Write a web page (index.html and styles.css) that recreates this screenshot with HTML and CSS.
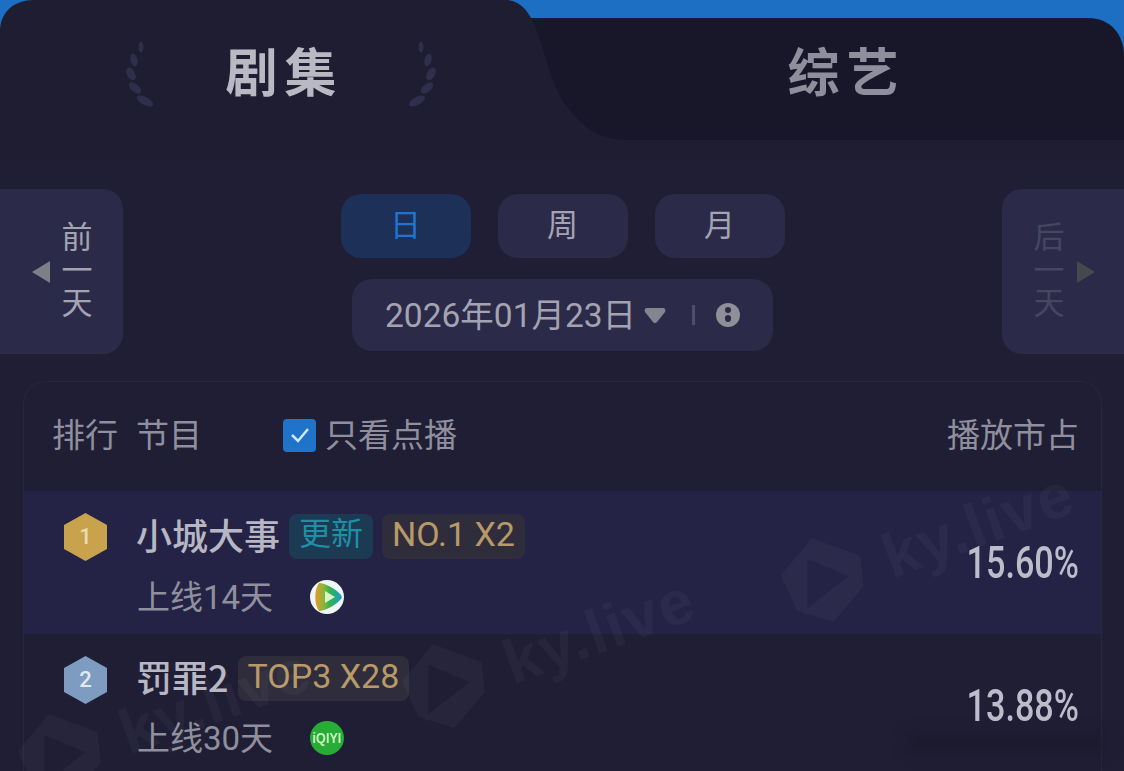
FILE: index.html
```html
<!DOCTYPE html>
<html lang="zh-CN">
<head>
    <meta charset="UTF-8">
    <meta name="viewport" content="width=device-width, initial-scale=1.0">
    <title>播放市占</title>
    <link rel="stylesheet" href="styles.css">
</head>
<body>
    <div class="tabs">
        <svg class="tabs-bg" width="1124" height="140" viewBox="0 0 1124 140">
            <path d="M500 18H1088C1110 18 1124 34 1124 56V140H500Z" fill="#18172a"/>
            <path d="M530 19H1092" stroke="#17184a" stroke-width="2"/>
            <path d="M0 32C0 12 14 0 34 0H506C520 0 529 12 535 26C548 60 552 88 568 108C584 130 604 140 626 140V140H0Z" fill="#1e1d32"/>
        </svg>
        <div class="tab tab-active">
            <svg class="laurel" width="32" height="66" viewBox="0 0 32 66">
                <g fill="#2f2e4b">
                    <ellipse cx="17" cy="6" rx="2.500" ry="5.500"/>
                    <ellipse cx="10" cy="19" rx="3.500" ry="6.500" transform="rotate(-15 10 19)"/>
                    <ellipse cx="7" cy="33" rx="4" ry="7" transform="rotate(-30 7 33)"/>
                    <ellipse cx="11" cy="47" rx="4" ry="7.500" transform="rotate(-50 11 47)"/>
                    <ellipse cx="21" cy="60" rx="4" ry="9" transform="rotate(-62 21 60)"/>
                </g>
            </svg>
            <span class="tab-label">剧集</span>
            <svg class="laurel laurel-right" width="32" height="66" viewBox="0 0 32 66">
                <g fill="#2f2e4b">
                    <ellipse cx="17" cy="6" rx="2.500" ry="5.500"/>
                    <ellipse cx="10" cy="19" rx="3.500" ry="6.500" transform="rotate(-15 10 19)"/>
                    <ellipse cx="7" cy="33" rx="4" ry="7" transform="rotate(-30 7 33)"/>
                    <ellipse cx="11" cy="47" rx="4" ry="7.500" transform="rotate(-50 11 47)"/>
                    <ellipse cx="21" cy="60" rx="4" ry="9" transform="rotate(-62 21 60)"/>
                </g>
            </svg>
        </div>
        <div class="tab">
            <span class="tab-label tab-label-dim">综艺</span>
        </div>
    </div>

    <div class="nav">
        <div class="side-btn side-prev">
            <span class="tri-left"></span>
            <div class="side-label">前一天</div>
        </div>
        <div class="nav-center">
            <div class="periods">
                <div class="period period-on">日</div>
                <div class="period">周</div>
                <div class="period">月</div>
            </div>
            <div class="date-pill">
                <span class="date-text">2026年01月23日</span>
                <svg class="date-arrow" width="22" height="17" viewBox="0 0 22 17">
                    <path d="M3 1H19C21 1 22 3 21 5L13 15C12 16.500 10 16.500 9 15L1 5C0 3 1 1 3 1Z" fill="#85858f"/>
                </svg>
                <span class="date-line"></span>
                <svg class="date-info" width="24" height="24" viewBox="0 0 24 24">
                    <circle cx="12" cy="12" r="12" fill="#8f8f99"/>
                    <circle cx="12" cy="7" r="3" fill="#2b2b48"/>
                    <rect x="9" y="12" width="6" height="7" rx="3" fill="#2b2b48"/>
                </svg>
            </div>
        </div>
        <div class="side-btn side-next">
            <div class="side-label">后一天</div>
            <span class="tri-right"></span>
        </div>
    </div>

    <div class="card">
        <div class="card-head">
            <span class="head-text">排行</span>
            <span class="head-text head-show">节目</span>
            <span class="check">
                <svg width="22" height="18" viewBox="0 0 22 18">
                    <path d="M3 9L9 15L19 3" fill="none" stroke="#cfe6fb" stroke-width="2.500"/>
                </svg>
            </span>
            <span class="head-text head-filter">只看点播</span>
            <span class="head-text head-share">播放市占</span>
        </div>

        <div class="row row-first">
            <div class="medal medal-gold">1</div>
            <div class="row-main">
                <div class="row-title">
                    <span class="row-name">小城大事</span>
                    <span class="tag tag-new">更新</span>
                    <span class="tag tag-gold">NO.1 X2</span>
                </div>
                <div class="row-sub row-sub-first">
                    <span class="row-days">上线14天</span>
                    <svg class="platform" width="34" height="34" viewBox="0 0 34 34">
                        <defs>
                            <linearGradient id="tencent" x1="0" y1="0" x2="1" y2="0">
                                <stop offset="0" stop-color="#e8962a"/>
                                <stop offset="0.300" stop-color="#8fb53a"/>
                                <stop offset="0.550" stop-color="#35b24e"/>
                                <stop offset="1" stop-color="#1a9ccb"/>
                            </linearGradient>
                        </defs>
                        <circle cx="17" cy="17" r="17" fill="#eef6f8"/>
                        <path d="M9 3C15 3 26 9 31 15C32 17 32 18 31 19C26 25 15 31 9 31C4 24 4 10 9 3Z" fill="url(#tencent)"/>
                        <path d="M15 11L25 17L15 23Z" fill="#d9f5c8"/>
                    </svg>
                </div>
            </div>
            <div class="row-share"><span class="share-num">15.60%</span></div>
        </div>

        <div class="row row-last">
            <div class="medal medal-silver">2</div>
            <div class="row-main">
                <div class="row-title">
                    <span class="row-name">罚罪2</span>
                    <span class="tag tag-gold">TOP3 X28</span>
                </div>
                <div class="row-sub">
                    <span class="row-days">上线30天</span>
                    <span class="platform platform-iqiyi"><span class="iqiyi-text">iQIYI</span></span>
                </div>
            </div>
            <div class="row-share"><span class="share-num">13.88%</span></div>
        </div>
    </div>

    <div class="wm wm-a">
        <svg class="wm-logo" width="84" height="86" viewBox="0 0 84 86"><g transform="rotate(20 42 43)"><path d="M32 3L78 20L81 48L52 82L18 71L3 38ZM25 18V75L72 38Z" fill="#fff" fill-rule="evenodd" stroke="#fff" stroke-width="4" stroke-linejoin="round"/></g></svg>
        <span>ky.live</span>
    </div>
    <div class="wm wm-b">
        <svg class="wm-logo" width="84" height="86" viewBox="0 0 84 86"><g transform="rotate(20 42 43)"><path d="M32 3L78 20L81 48L52 82L18 71L3 38ZM25 18V75L72 38Z" fill="#fff" fill-rule="evenodd" stroke="#fff" stroke-width="4" stroke-linejoin="round"/></g></svg>
        <span>ky.live</span>
    </div>
    <div class="wm wm-c">
        <svg class="wm-logo" width="84" height="86" viewBox="0 0 84 86"><g transform="rotate(20 42 43)"><path d="M32 3L78 20L81 48L52 82L18 71L3 38ZM25 18V75L72 38Z" fill="#fff" fill-rule="evenodd" stroke="#fff" stroke-width="4" stroke-linejoin="round"/></g></svg>
        <span>ky.live</span>
    </div>
    <div class="smudge"></div>
</body>
</html>
```

FILE: styles.css
```css
html {
    overflow: hidden;
}
body {
    margin: 0;
    width: 1124px;
    height: 771px;
    overflow: hidden;
    position: relative;
    background: linear-gradient(to bottom, #1e1d32 161px, #1f1e34 161px);
    font-family: "Noto Sans CJK SC", "Noto Sans", sans-serif;
    color: #9a9aa8;
}
.tabs {
    position: relative;
    display: flex;
    height: 140px;
    background: #1c6fc2;
}
.tabs-bg {
    position: absolute;
    left: 0;
    top: 0;
}
.tab {
    position: relative;
    flex: 1;
    display: flex;
    justify-content: center;
    align-items: flex-start;
    gap: 69px;
    height: 140px;
}
.laurel {
    margin-top: 41px;
}
.laurel-right {
    transform: scaleX(-1);
}
.tab-label {
    font-size: 52px;
    font-weight: 700;
    line-height: 70px;
    margin-top: 35px;
    letter-spacing: 7px;
    margin-right: -7px;
    color: #b9b9c4;
}
.tab-label-dim {
    color: #8e8e9c;
}
.nav {
    display: flex;
    margin-top: 49px;
    height: 165px;
}
.side-btn {
    width: 123px;
    display: flex;
    align-items: center;
    background: #2b2a48;
    color: #a3a3b2;
    font-size: 31px;
}
.side-prev {
    border-radius: 0 20px 20px 0;
    padding-left: 32px;
    gap: 11px;
    box-sizing: border-box;
}
.side-next {
    width: 122px;
    border-radius: 20px 0 0 20px;
    padding-left: 31px;
    gap: 12px;
    box-sizing: border-box;
    color: #464660;
}
.side-label {
    width: 32px;
    line-height: 33px;
    text-align: center;
    margin-bottom: 8px;
}
.tri-left {
    width: 0;
    height: 0;
    border-top: 11px solid transparent;
    border-bottom: 11px solid transparent;
    border-right: 18px solid #7f7f8a;
}
.tri-right {
    width: 0;
    height: 0;
    border-top: 11px solid transparent;
    border-bottom: 11px solid transparent;
    border-left: 18px solid #45484c;
}
.nav-center {
    flex: 1;
    display: flex;
    flex-direction: column;
    align-items: center;
    padding-top: 5px;
    gap: 21px;
}
.periods {
    display: flex;
    gap: 27px;
}
.period {
    width: 130px;
    height: 64px;
    border-radius: 20px;
    background: #2b2a48;
    color: #a3a3b2;
    font-size: 31px;
    line-height: 58px;
    text-align: center;
}
.period-on {
    background: #1c3058;
    color: #1f74cf;
}
.date-pill {
    display: flex;
    align-items: center;
    width: 421px;
    height: 72px;
    box-sizing: border-box;
    padding-left: 33px;
    border-radius: 20px;
    background: #2b2a48;
    color: #a3a3b2;
    font-size: 33.500px;
    font-family: "Roboto", "Noto Sans CJK SC", sans-serif;
    white-space: nowrap;
}
.date-text {
    margin-top: -6px;
}
.date-arrow {
    margin-left: 8px;
}
.date-line {
    width: 3px;
    height: 20px;
    margin-left: 26px;
    background: #4e4e66;
}
.date-info {
    margin-left: 21px;
}
.card {
    margin: 27px 22px 0 23px;
    height: 390px;
    border: 1px solid #27263e;
    border-bottom: none;
    border-radius: 22px 22px 0 0;
}
.card-head {
    display: flex;
    align-items: center;
    height: 109px;
    padding: 0 22px 0 28px;
    font-size: 33px;
    color: #8f8f9d;
}
.head-text {
    margin-top: -8px;
}
.head-show {
    margin-left: 18px;
}
.check {
    display: flex;
    align-items: center;
    justify-content: center;
    width: 33px;
    height: 33px;
    margin-left: 81px;
    margin-top: -3px;
    border-radius: 4px;
    background: #1f74c9;
}
.head-filter {
    margin-left: 9px;
}
.head-share {
    margin-left: auto;
}
.row {
    display: flex;
    height: 143px;
    box-sizing: border-box;
    padding: 22px 22px 0 40px;
}
.row-first {
    background: #252345;
}
.row-last {
    height: 137px;
}
.medal {
    width: 43px;
    height: 48px;
    flex: none;
    clip-path: polygon(50% 0, 100% 25%, 100% 75%, 50% 100%, 0 75%, 0 25%);
    font-size: 22px;
    font-weight: 500;
    line-height: 48px;
    text-align: center;
    font-family: "Roboto", sans-serif;
}
.medal-gold {
    background: #c9a24e;
    color: #ecdcb0;
}
.medal-silver {
    background: #7d9cc0;
    color: #e3e9f2;
}
.row-main {
    flex: 1;
    margin-left: 30px;
}
.row-first .row-main {
    margin-top: 1px;
}
.row-title {
    display: flex;
    align-items: center;
    height: 45px;
    gap: 9px;
}
.row-name {
    font-size: 36px;
    font-weight: 500;
    color: #b7b7c4;
    margin-top: -6px;
    margin-left: -1px;
}
.tag {
    height: 45px;
    padding: 0 10px;
    border-radius: 8px;
    font-size: 34px;
    line-height: 41px;
    font-family: "Roboto", "Noto Sans CJK SC", sans-serif;
}
.tag-new {
    background: #1c3a52;
    color: #1f8fa6;
    font-size: 32px;
}
.tag-gold {
    background: #2f2c3c;
    color: #b89a68;
}
.row-sub {
    display: flex;
    align-items: center;
    height: 34px;
    margin-top: 20px;
    font-size: 33px;
    color: #8f8f9d;
    font-family: "Roboto", "Noto Sans CJK SC", sans-serif;
}
.row-sub-first {
    margin-top: 21px;
}
.row-days {
    width: 173px;
    margin-top: -4px;
}
.platform {
    flex: none;
}
.platform-iqiyi {
    display: flex;
    align-items: center;
    justify-content: center;
    width: 34px;
    height: 34px;
    border-radius: 50%;
    background: #27ad36;
    color: #c9f5c2;
    font-family: "Liberation Sans", sans-serif;
    font-size: 14px;
    font-weight: 700;
}
.iqiyi-text {
    transform: scaleX(0.9);
}
.row-share {
    display: flex;
    justify-content: flex-end;
    align-self: center;
    margin-top: -22px;
    width: 120px;
    font-size: 45px;
    font-weight: 500;
    line-height: 50px;
    color: #bcbcca;
    font-family: "Roboto", sans-serif;
}
.row-last .row-share {
    margin-top: -16px;
}
.share-num {
    transform: scaleX(0.76);
    transform-origin: right center;
}
.wm {
    position: absolute;
    display: flex;
    align-items: center;
    gap: 24px;
    transform: rotate(-20deg);
    transform-origin: left center;
    opacity: 0.03;
    color: #fff;
    font-family: "Liberation Sans", sans-serif;
    font-size: 62px;
    font-weight: 700;
    letter-spacing: 2px;
    white-space: nowrap;
}
.wm-logo {
    overflow: visible;
}
.wm-a {
    left: 783px;
    top: 552px;
}
.wm-b {
    left: 404px;
    top: 658px;
}
.wm-c {
    left: 20px;
    top: 728px;
}
.smudge {
    position: absolute;
    left: 905px;
    top: 732px;
    width: 205px;
    height: 22px;
    background: #14141f;
    opacity: 0.3;
    filter: blur(8px);
}
```
